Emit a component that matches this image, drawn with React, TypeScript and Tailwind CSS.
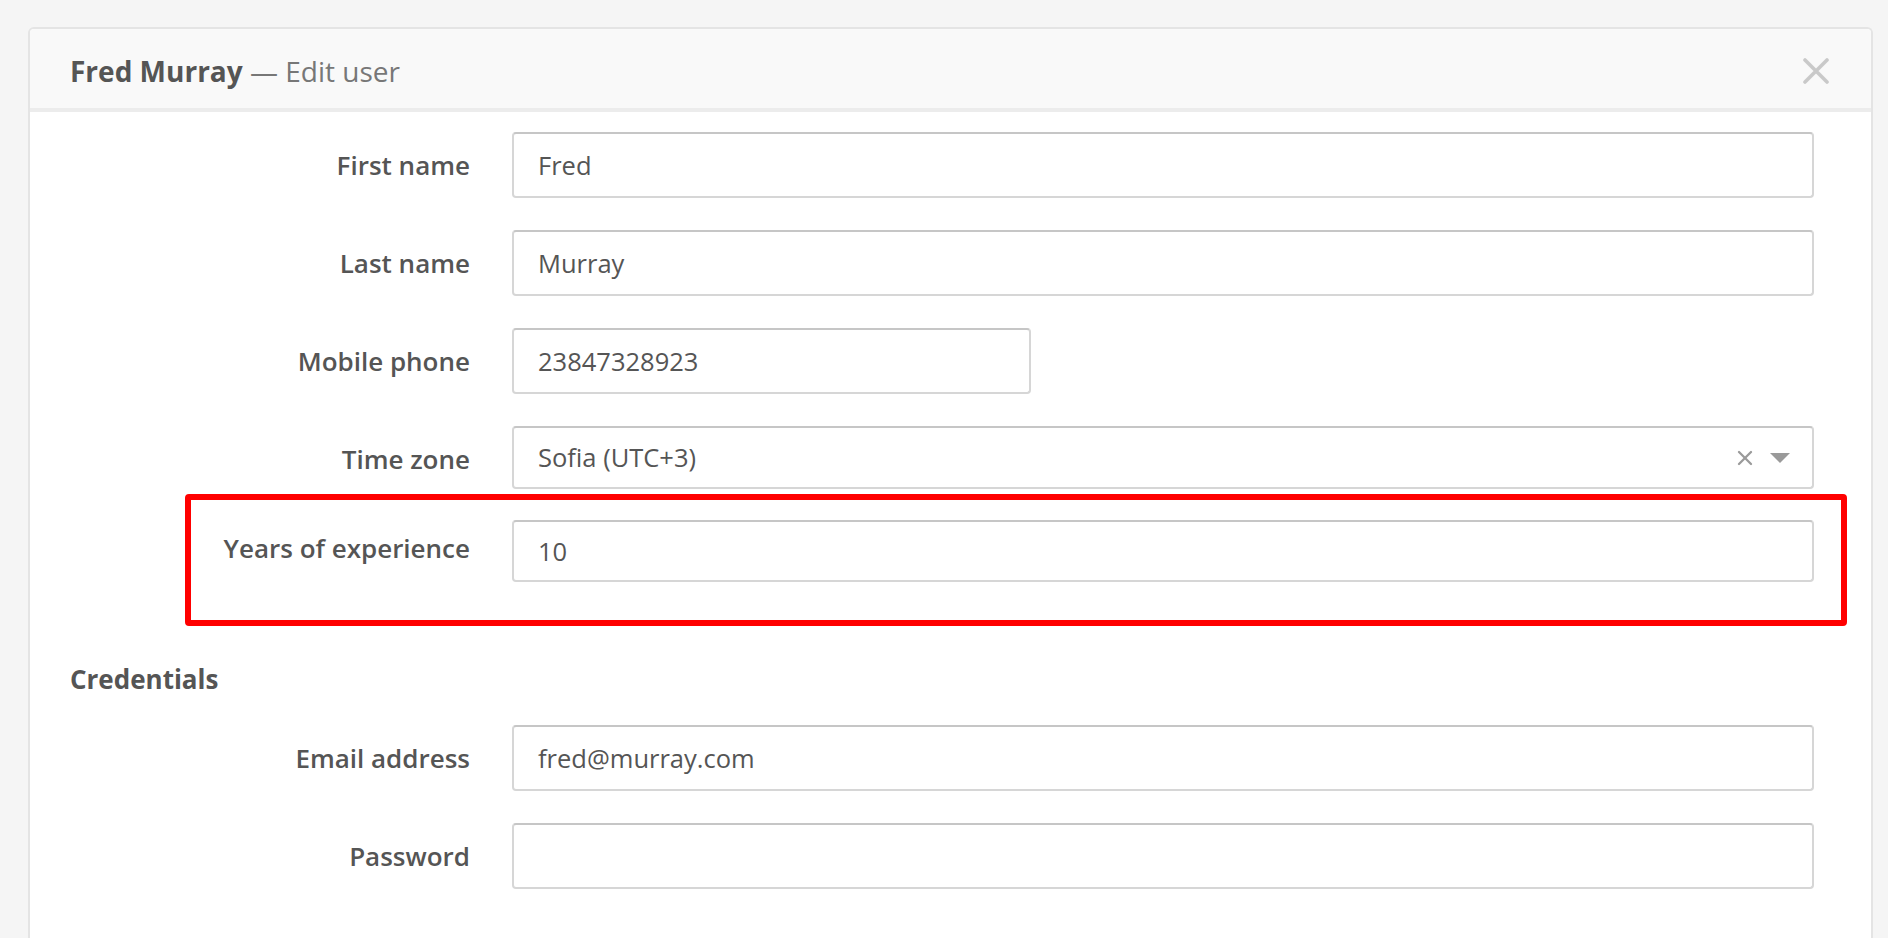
import { X } from 'lucide-react';

type Field = {
  label: string;
  value: string;
  inputWidth?: string;
  height: string;
  select?: boolean;
};

const profileFields: Field[] = [
  { label: 'First name', value: 'Fred', height: 'h-[66px]' },
  { label: 'Last name', value: 'Murray', height: 'h-[66px]' },
  { label: 'Mobile phone', value: '23847328923', inputWidth: 'w-[519px]', height: 'h-[66px]' },
  { label: 'Time zone', value: 'Sofia (UTC+3)', height: 'h-[63px]', select: true },
];

function FieldRow({ field, labelClass = 'h-[66px]' }: { field: Field; labelClass?: string }) {
  return (
    <div className="flex items-start">
      <div className={`w-[440px] shrink-0 flex items-center justify-end text-[26px] font-semibold text-[#555] ${labelClass}`}>
        {field.label}
      </div>
      <div className="ml-[42px] flex-1">
        <div
          className={`${field.inputWidth ?? 'w-full'} ${field.height} flex items-center rounded-[4px] border-2 border-[#d6d6d6] border-t-[#c6c6c6] bg-white pl-[24px] pr-[22px] text-[25.5px] text-[#555]`}
        >
          <span className="flex-1">{field.value}</span>
          {field.select && (
            <div className="flex items-center gap-[13px]">
              <X className="w-[24px] h-[24px] text-[#9a9a9a]" strokeWidth={2.3} />
              <svg width="20" height="10" viewBox="0 0 20 10">
                <path d="M0 0 L20 0 L10 10 Z" fill="#9a9a9a" />
              </svg>
            </div>
          )}
        </div>
      </div>
    </div>
  );
}

export default function App() {
  return (
    <div
      className="bg-[#f5f5f5] pt-[27px] pl-[28px] pr-[15px] overflow-hidden h-[938px]"
      style={{ fontFamily: '"Open Sans", "Liberation Sans", sans-serif' }}
    >
      <div className="rounded-t-[6px] border-2 border-b-0 border-[#e4e4e4] bg-white h-[1000px]">
        <div className="h-[83px] bg-[#f9f9f9] border-b-4 border-[#ececec] rounded-t-[4px] flex items-center justify-between pl-[40px] pr-[42px]">
          <h1 className="text-[28px] text-[#555] pt-[4px]">
            <span className="font-bold">Fred Murray</span>
            <span className="text-[#777]"> — Edit user</span>
          </h1>
          <svg width="26" height="26" viewBox="0 0 26 26" className="mt-[4px]">
            <path d="M2 2 L24 24 M24 2 L2 24" stroke="#c9c9c9" strokeWidth="3.6" strokeLinecap="round" />
          </svg>
        </div>

        <div className="pt-[20px] pr-[57px]">
          <div className="flex flex-col gap-[32px]">
            {profileFields.map((f) => (
              <FieldRow key={f.label} field={f} />
            ))}
            <div className="relative -mt-[4px]">
              <FieldRow
                field={{ label: 'Years of experience', value: '10', height: 'h-[62px]' }}
                labelClass="h-[56px]"
              />
              <div className="absolute top-[-26px] bottom-[-44px] left-[155px] right-[-33px] border-[6px] border-[#ff0000] rounded-[4px] pointer-events-none" />
            </div>
          </div>

          <h2 className="mt-[79px] pl-[40px] text-[26px] font-bold text-[#555] leading-[36px]">Credentials</h2>

          <div className="mt-[28px] flex flex-col gap-[32px]">
            <FieldRow field={{ label: 'Email address', value: 'fred@murray.com', height: 'h-[66px]' }} />
            <FieldRow field={{ label: 'Password', value: '', height: 'h-[66px]' }} />
          </div>
        </div>
      </div>
    </div>
  );
}
